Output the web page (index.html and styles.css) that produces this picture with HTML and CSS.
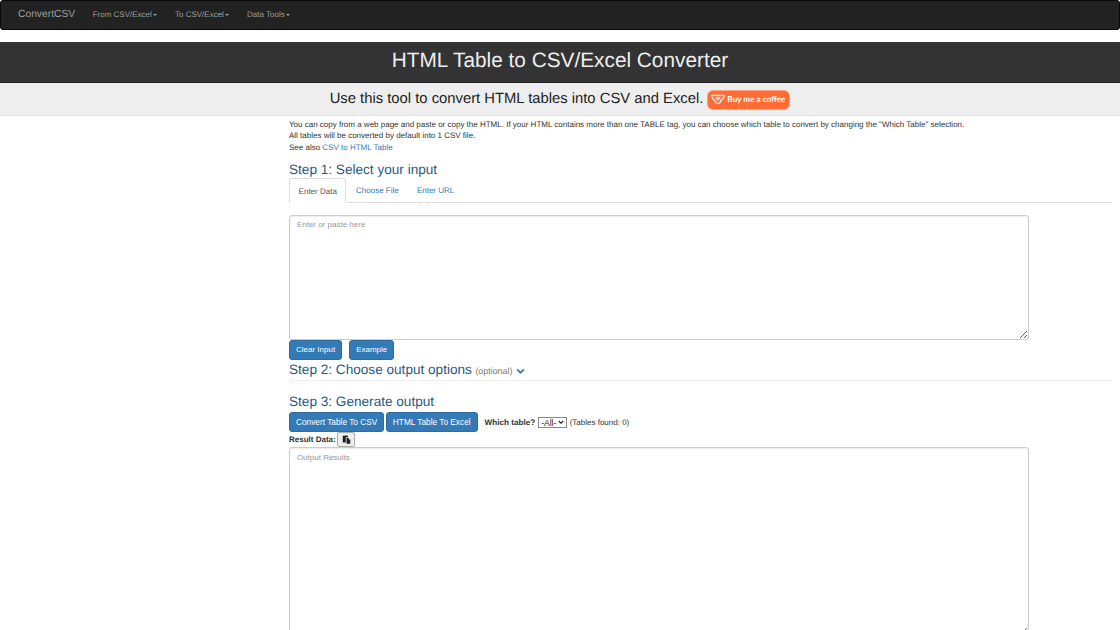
FILE: index.html
```html
<!DOCTYPE html>
<html lang="en">
<head>
<meta charset="utf-8">
<title>HTML Table to CSV/Excel Converter</title>
<link rel="stylesheet" href="styles.css">
</head>
<body>
<nav class="navbar">
  <a class="brand">ConvertCSV</a>
  <a class="nav-item">From CSV/Excel<span class="caret"></span></a>
  <a class="nav-item">To CSV/Excel<span class="caret"></span></a>
  <a class="nav-item">Data Tools<span class="caret"></span></a>
</nav>
<header class="title-band"><h1>HTML Table to CSV/Excel Converter</h1></header>
<div class="sub-band">
  <span class="sub-text">Use this tool to convert HTML tables into CSV and Excel.</span>
  <a class="coffee">
    <svg class="coffee-icon" viewBox="0 0 18 14" width="14" height="11"><path d="M2 1.500h14c.8 0 1.300.7 1 1.500l-1.500 3.500c-.3.7-.9 1-1.600 1h-.9l-.8 3c-.2.800-.8 1.300-1.600 1.300H7c-.8 0-1.400-.5-1.600-1.300l-.8-3H4c-.7 0-1.300-.3-1.600-1L1 3c-.3-.8.200-1.500 1-1.500z" fill="#e9845f" stroke="#fff" stroke-width="1.300"/><path d="M9 4.300c-1-1-2.800-.3-2.500 1.200.2 1 1.400 1.800 2.500 2.500 1.100-.7 2.300-1.500 2.500-2.500C11.800 4 10 3.300 9 4.300z" fill="#f6d5c8"/></svg>
    <span>Buy me a coffee</span>
  </a>
</div>
<main class="content">
  <p class="intro">You can copy from a web page and paste or copy the HTML. If your HTML contains more than one TABLE tag, you can choose which table to convert by changing the "Which Table" selection.<br>All tables will be converted by default into 1 CSV file.<br>See also <a class="link">CSV to HTML Table</a></p>
  <h2 class="step step-1">Step 1: Select your input</h2>
  <ul class="tabs">
    <li class="tab active">Enter Data</li>
    <li class="tab">Choose File</li>
    <li class="tab">Enter URL</li>
  </ul>
  <textarea class="box input-box" placeholder="Enter or paste here"></textarea>
  <div class="btn-row gap-wide">
    <button class="btn">Clear Input</button>
    <button class="btn">Example</button>
  </div>
  <div class="step-2-row">
    <h2 class="step">Step 2: Choose output options</h2>
    <small class="optional">(optional)</small>
    <svg class="chev" viewBox="0 0 10 7" width="9" height="6"><path d="M1 1.500l4 4 4-4" fill="none" stroke="#337ab7" stroke-width="2"/></svg>
  </div>
  <h2 class="step step-3">Step 3: Generate output</h2>
  <div class="btn-row action-row">
    <button class="btn btn-wide">Convert Table To CSV</button>
    <button class="btn btn-wide">HTML Table To Excel</button>
    <b class="which">Which table?</b>
    <select class="pick"><option>-All-</option></select>
    <span class="found">(Tables found: 0)</span>
  </div>
  <div class="result-row">
    <b>Result Data:</b>
    <button class="copy-btn" aria-label="Copy">
      <svg viewBox="0 0 12 12" width="9" height="9"><path d="M1 1h3v-.500h2V1h2v2H5v7H1z" fill="#222"/><path d="M6 4h3v2h2v5.500H6z" fill="#222"/></svg>
    </button>
  </div>
  <textarea class="box output-box" placeholder="Output Results"></textarea>
</main>
</body>
</html>
```
FILE: styles.css
```css
* { box-sizing: border-box; }
html, body { margin: 0; height: 630px; overflow: hidden; }
body { font-family: "Liberation Sans", Arial, sans-serif; font-size: 8px; line-height: 11.43px; color: #333; background: #fff; text-rendering: geometricPrecision; }
.navbar { height: 30px; display: flex; align-items: center; background: #222; border: 1px solid #080808; border-radius: 3px; color: #9d9d9d; }
.brand { font-size: 10.29px; margin-left: 17px; margin-right: 17.500px; }
.nav-item { margin-right: 18px; }
.caret { display: inline-block; margin-left: 1.200px; vertical-align: middle; border-top: 2.300px solid #9d9d9d; border-left: 2.300px solid transparent; border-right: 2.300px solid transparent; }
.title-band { margin-top: 12px; height: 41px; padding-bottom: 1px; background: #333; border-bottom: 1px solid #222; display: flex; align-items: center; justify-content: center; }
.title-band h1 { margin: 0; font-size: 20.800px; font-weight: 400; color: #eee; line-height: 1; }
.sub-band { height: 33px; padding-top: 1px; background: #eee; border-bottom: 1px solid #e4e4e4; display: flex; align-items: center; justify-content: center; gap: 4px; }
.sub-text { font-size: 14.800px; color: #222; }
.coffee { display: flex; align-items: center; gap: 2px; height: 20px; width: 83px; padding: 0 3px; background: #ff6b35; border: 1px solid #ffa07f; border-radius: 6px; color: #fff; font-weight: 700; font-size: 8.200px; font-family: "Lato", sans-serif; white-space: nowrap; }
.content { margin-left: 289px; padding-right: 8px; }
.intro { margin: 3px 0 0; }
.link, .tab { color: #337ab7; }
.step { margin: 0; font-size: 13.600px; font-weight: 400; line-height: 16px; color: #2a5a84; }
.step-1 { margin-top: 9px; }
.tabs { list-style: none; margin: 0; padding: 0; height: 25px; display: flex; gap: 1px; border-bottom: 1px solid #ddd; }
.tab { padding: 7px 8.600px 0; height: 24.500px; }
.active { color: #555; background: #fff; border: 1px solid #ddd; border-bottom-color: #fff; border-radius: 3px 3px 0 0; }
.box { display: block; width: 740px; border: 1px solid #ccc; border-radius: 3px; padding: 3.400px 6.900px; font: inherit; resize: vertical; background: #fff; box-shadow: inset 0 1px 1px rgba(0,0,0,.075); }
.box::placeholder { color: #999; opacity: 1; }
.input-box { height: 125px; margin-top: 11.500px; }
.output-box { height: 190px; }
.btn-row { display: flex; align-items: center; gap: 1.500px; }
.gap-wide { gap: 7px; }
.action-row { margin-top: 2px; }
.btn { height: 20px; padding: 0 6px; font: inherit; color: #fff; background: #337ab7; border: 1px solid #2e6da4; border-radius: 3px; }
.btn-wide { font-size: 8.300px; }
.step-2-row { display: flex; align-items: baseline; gap: 3.500px; height: 21px; padding-top: 2px; border-bottom: 1px solid #eee; }
.optional { font-size: 8.900px; color: #777; }
.chev { align-self: center; margin-top: 1px; }
.step-3 { margin-top: 13.500px; }
.which { margin-left: 5.500px; margin-right: 1.500px; font-size: 8.150px; }
.pick { appearance: none; font: inherit; font-size: 8.500px; height: 11px; width: 29px; padding: 0 0 0 2px; color: #222; border: 1px solid #888; border-radius: 0; background: #fff url("data:image/svg+xml,%3Csvg xmlns='http://www.w3.org/2000/svg' viewBox='0 0 8 6'%3E%3Cpath d='M1 1l3 3 3-3' fill='none' stroke='%23222' stroke-width='1.500'/%3E%3C/svg%3E") no-repeat right 2px center / 6px 5px; }
.found { margin-left: 1px; }
.result-row { display: flex; align-items: center; gap: 1.500px; height: 15px; font-weight: 700; }
.copy-btn { width: 18px; height: 15px; padding: 0; display: flex; align-items: center; justify-content: center; background: #eee; border: 1px solid #aaa; border-radius: 2px; }
```
